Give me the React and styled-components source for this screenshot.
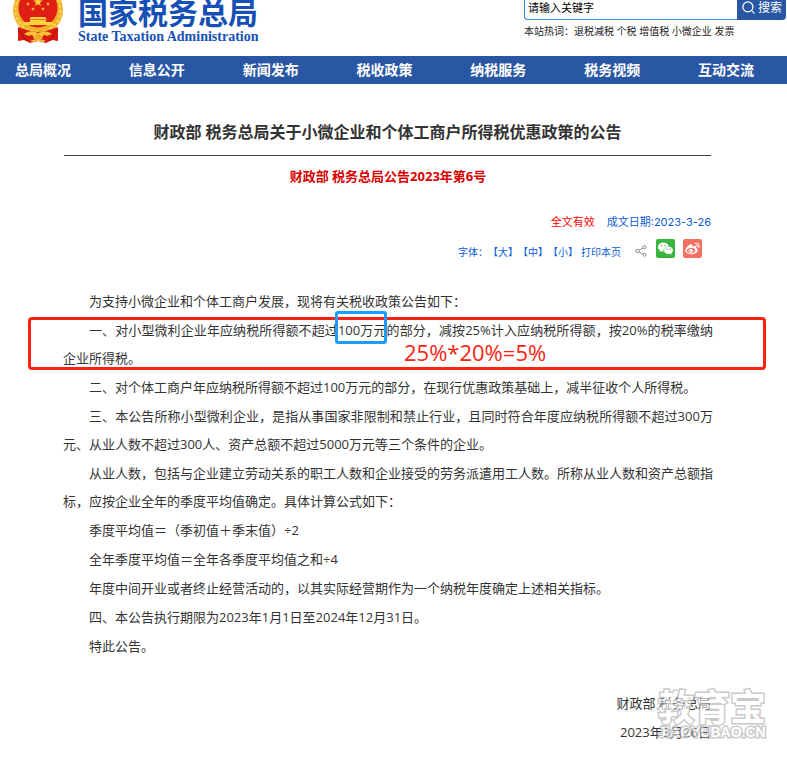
import React from "react";
import styled, {createGlobalStyle, css} from "styled-components";
import {AiFillWechat, AiOutlineWeibo} from "react-icons/ai";
import {FiSearch} from "react-icons/fi";

const GlobalStyle = createGlobalStyle`
	* {
		box-sizing: border-box;
	}

	body {
		margin: 0;
		background-color: #fff;
		color: #333;
		font-family: "Open Sans", "Noto Sans CJK SC", sans-serif;
		text-spacing-trim: space-all;
		overflow-x: hidden;
	}

	h1, h2, p {
		margin: 0;
	}
`;

const Header = styled.header`
	display: flex;
	justify-content: space-between;
	align-items: flex-end;
	height: 56px;
	padding-left: 12px;
	overflow: hidden;
`;

const Brand = styled.a`
	display: flex;
	align-items: flex-end;
	gap: 14px;
	color: #1650b4;
	text-decoration: none;
	padding-bottom: 12px;
`;

const BrandName = styled.div`
	display: flex;
	flex-direction: column;
`;

const BrandTitle = styled.span`
	font-size: 30px;
	font-weight: 700;
	line-height: 32px;
`;

const BrandSub = styled.span`
	font-family: "Liberation Serif", serif;
	font-size: 14px;
	font-weight: 700;
	line-height: 15px;
`;

const SearchArea = styled.div`
	width: 263px;
	padding-bottom: 17px;
`;

const SearchForm = styled.form`
	display: flex;
	height: 26px;
	padding-right: 1px;
`;

const SearchInput = styled.input`
	flex: 1;
	min-width: 0;
	border: 1px solid #3f87d4;
	border-right: none;
	border-radius: 4px 0 0 4px;
	padding: 0 3px;
	font-family: inherit;
	font-size: 11px;
	color: #000;

	&::placeholder {
		color: #000;
	}
`;

const SearchButton = styled.button`
	display: flex;
	align-items: center;
	justify-content: center;
	gap: 2px;
	width: 49px;
	border: none;
	border-radius: 0 4px 4px 0;
	padding: 0;
	background-color: #2957a4;
	color: #fff;
	font-family: inherit;
	font-size: 12px;
`;

const HotWords = styled.p`
	margin-top: 4px;
	font-size: 10px;
	line-height: 15px;
	color: #222;
`;

const Nav = styled.nav`
	display: flex;
	justify-content: space-between;
	padding: 0 33px 0 15px;
	background-color: #2957a4;
`;

const NavLink = styled.a`
	color: #fff;
	font-size: 14px;
	font-weight: 700;
	line-height: 28px;
	text-decoration: none;
`;

const Article = styled.main`
	position: relative;
	padding: 34px 74px 12px 63px;
`;

const Title = styled.h1`
	margin: 0 2px 0 1px;
	border-bottom: 1px solid #444;
	padding-bottom: 9px;
	font-size: 16px;
	font-weight: 700;
	line-height: 28px;
	text-align: center;
`;

const DocNumber = styled.h2`
	margin-top: 6px;
	color: #d80000;
	font-size: 13px;
	font-weight: 700;
	line-height: 28px;
	text-align: center;
`;

const MetaRow = styled.div`
	display: flex;
	justify-content: flex-end;
	align-items: center;
	color: #0b5cd5;
	${(props) =>
		props.$kind === "tools"
			? css`
					height: 32px;
					padding-right: 11px;
					font-size: 10px;
			  `
			: css`
					gap: 12px;
					height: 28px;
					margin-top: 17px;
					padding-right: 2px;
					font-family: "Inter", "Noto Sans CJK SC", sans-serif;
					font-size: 11px;
			  `}
`;

const Valid = styled.span`
	color: #f00;
`;

const ToolLink = styled.a`
	color: inherit;
	text-decoration: none;
`;

const SizeLinks = styled.span`
	margin-right: 3px;
`;

const ShareButton = styled.button`
	display: flex;
	align-items: center;
	justify-content: center;
	width: ${(props) => (props.$bg ? "19px" : "12px")};
	height: ${(props) => (props.$bg ? "19px" : "12px")};
	margin: ${(props) => (props.$bg ? "0 0 6px 8px" : "0 1px 0 14px")};
	border: none;
	border-radius: 2px;
	padding: 0;
	background-color: ${(props) => props.$bg || "transparent"};
	color: #fff;
`;

const Body = styled.section`
	margin-top: 20px;
	font-size: 13px;
	line-height: 28px;
`;

const Paragraph = styled.p`
	position: relative;
	margin-bottom: 1px;
	text-align: justify;
	text-indent: 26px;
`;

const RedFrame = styled.span`
	position: absolute;
	inset: 1px -53px 2px -35px;
	border: 3px solid #fb2310;
	border-radius: 4px;
	pointer-events: none;
`;

const BlueFrame = styled.span`
	position: relative;
	text-indent: 0;

	&::after {
		content: "";
		position: absolute;
		z-index: 1;
		inset: -10px 0 -5px -3px;
		border: 3px solid #1e9bff;
		border-radius: 3px;
	}
`;

const Note = styled.span`
	position: absolute;
	top: 22px;
	left: 341px;
	color: #fb2310;
	font-size: 22px;
	text-indent: 0;
`;

const Signature = styled.div`
	position: relative;
	margin-top: 29px;
	padding-right: 2px;
	text-align: right;
`;

const SignLine = styled.p`
	margin-bottom: 1px;
`;

const Watermark = styled.div`
	position: absolute;
	top: 2px;
	right: -53px;
	display: flex;
	flex-direction: column;
	align-items: center;
	color: #fff;
	font-weight: 700;
	opacity: 0.6;
	paint-order: stroke;
	-webkit-text-stroke: 3px #a8a8a8;
`;

const WatermarkName = styled.span`
	font-size: 36px;
	line-height: 34px;
`;

const WatermarkUrl = styled.span`
	font-family: "Liberation Sans", sans-serif;
	font-size: 14px;
	line-height: 14px;
`;

const navItems = ["总局概况", "信息公开", "新闻发布", "税收政策", "纳税服务", "税务视频", "互动交流"];

// x, y and scale of the five stars in the emblem
const stars = [
	[26, 18, 5],
	[16, 20, 2],
	[36, 20, 2],
	[21, 25, 2],
	[31, 25, 2],
];

const STAR = "M0 -1 L.25 -.35 L.95 -.31 L.4 .13 L.59 .81 L0 .42 L-.59 .81 L-.4 .13 L-.95 -.31 L-.25 -.35Z";

function Emblem() {
	return (
		<svg width="52" height="60" viewBox="0 0 52 60" aria-hidden="true">
			<circle cx="26" cy="26" r="25" fill="#f0b429" />
			<circle cx="26" cy="26" r="22.5" fill="none" stroke="#f9d75a" strokeWidth="2" strokeDasharray="3 2" />
			<path d="M6 43 L15 46 Q26 50 37 46 L46 43 L46 57 L40 56 L34 59 L26 57 L18 59 L12 56 L6 57Z" fill="#d91a12" />
			<circle cx="26" cy="24" r="19.5" fill="#df1f13" />
			{stars.map(([x, y, scale]) => (
				<path key={x} d={STAR} transform={`translate(${x} ${y}) scale(${scale})`} fill="#fbd23c" />
			))}
			<path d="M19 33 H33 L35 35.5 H17Z M18 36 H34 V38 H18Z M11 38 H41 V41 H11Z" fill="#fbd23c" />
			<path d="M12 50 Q18 45 26 49 Q34 45 40 50 L35 52 Q31 49 30 55 H22 Q21 49 17 52Z" fill="#f7c336" />
			<circle cx="26" cy="53" r="3" fill="#f0a828" />
			<path d="M18 57 Q26 53 34 57 L31 58 Q26 56 21 58Z" fill="#f7c336" />
			<path d="M7 45 L14 57 M45 45 L38 57" stroke="#a90f0c" fill="none" />
		</svg>
	);
}

function ShareIcon() {
	return (
		<svg width="12" height="12" viewBox="0 0 12 12" fill="none" stroke="#8b8b8b">
			<circle cx="2.4" cy="6" r="1.7" />
			<circle cx="9.5" cy="2.2" r="1.5" />
			<circle cx="9.5" cy="9.8" r="1.5" />
			<path d="M4 5.2 L8 3 M4 6.8 L8 9" />
		</svg>
	);
}

function App() {
	return (
		<>
			<GlobalStyle />
			<Header>
				<Brand href="#">
					<Emblem />
					<BrandName>
						<BrandTitle>国家税务总局</BrandTitle>
						<BrandSub>State Taxation Administration</BrandSub>
					</BrandName>
				</Brand>
				<SearchArea>
					<SearchForm>
						<SearchInput type="text" aria-label="搜索" placeholder="请输入关键字" />
						<SearchButton type="button">
							<FiSearch size={15} />
							搜索
						</SearchButton>
					</SearchForm>
					<HotWords>本站热词：退税减税 个税 增值税 小微企业 发票</HotWords>
				</SearchArea>
			</Header>
			<Nav>
				{navItems.map((item) => (
					<NavLink href="#" key={item}>
						{item}
					</NavLink>
				))}
			</Nav>
			<Article>
				<Title>财政部 税务总局关于小微企业和个体工商户所得税优惠政策的公告</Title>
				<DocNumber>财政部 税务总局公告2023年第6号</DocNumber>
				<MetaRow>
					<Valid>全文有效</Valid>
					<span>成文日期:2023-3-26</span>
				</MetaRow>
				<MetaRow $kind="tools">
					<SizeLinks>
						字体：
						<ToolLink href="#">【大】</ToolLink>
						<ToolLink href="#">【中】</ToolLink>
						<ToolLink href="#">【小】</ToolLink>
					</SizeLinks>
					<ToolLink href="#">打印本页</ToolLink>
					<ShareButton aria-label="分享">
						<ShareIcon />
					</ShareButton>
					<ShareButton $bg="#38b53c" aria-label="微信">
						<AiFillWechat size={17} />
					</ShareButton>
					<ShareButton $bg="#f56f62" aria-label="微博">
						<AiOutlineWeibo size={17} />
					</ShareButton>
				</MetaRow>
				<Body>
					<Paragraph>为支持小微企业和个体工商户发展，现将有关税收政策公告如下：</Paragraph>
					<Paragraph>
						一、对小型微利企业年应纳税所得额不超过<BlueFrame>100万元</BlueFrame>
						的部分，减按25%计入应纳税所得额，按20%的税率缴纳企业所得税。
						<RedFrame />
						<Note>25%*20%=5%</Note>
					</Paragraph>
					<Paragraph>
						二、对个体工商户年应纳税所得额不超过100万元的部分，在现行优惠政策基础上，减半征收个人所得税。
					</Paragraph>
					<Paragraph>
						三、本公告所称小型微利企业，是指从事国家非限制和禁止行业，且同时符合年度应纳税所得额不超过300万元、从业人数不超过300人、资产总额不超过5000万元等三个条件的企业。
					</Paragraph>
					<Paragraph>
						从业人数，包括与企业建立劳动关系的职工人数和企业接受的劳务派遣用工人数。所称从业人数和资产总额指标，应按企业全年的季度平均值确定。具体计算公式如下：
					</Paragraph>
					<Paragraph>季度平均值＝（季初值＋季末值）÷2</Paragraph>
					<Paragraph>全年季度平均值＝全年各季度平均值之和÷4</Paragraph>
					<Paragraph>年度中间开业或者终止经营活动的，以其实际经营期作为一个纳税年度确定上述相关指标。</Paragraph>
					<Paragraph>四、本公告执行期限为2023年1月1日至2024年12月31日。</Paragraph>
					<Paragraph>特此公告。</Paragraph>
					<Signature>
						<SignLine>财政部 税务总局</SignLine>
						<SignLine>2023年3月26日</SignLine>
						<Watermark>
							<WatermarkName>教育宝</WatermarkName>
							<WatermarkUrl>JIAOYUBAO.CN</WatermarkUrl>
						</Watermark>
					</Signature>
				</Body>
			</Article>
		</>
	);
}

export default App;
